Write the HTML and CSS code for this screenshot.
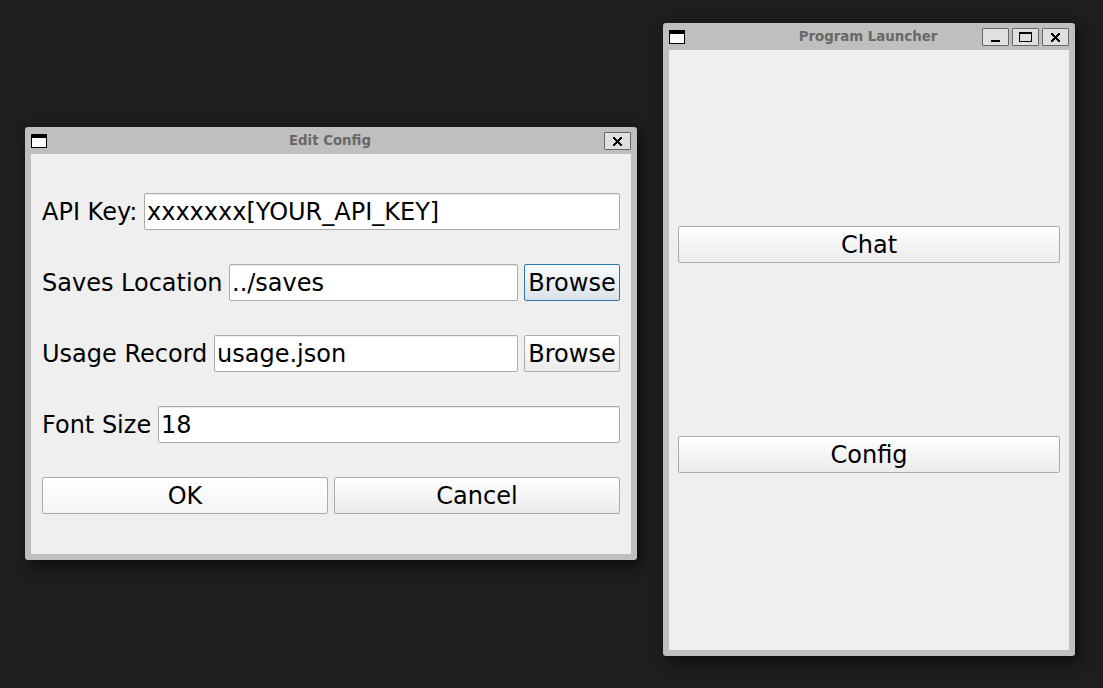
FILE: index.html
```
<!DOCTYPE html>
<html lang="en">
<head>
<meta charset="utf-8">
<title>Program Launcher</title>
<link rel="stylesheet" href="styles.css">
</head>
<body>
<main class="desktop">
  <section class="window config-window">
    <header class="titlebar">
      <span class="window-icon"></span>
      <h1 class="title">Edit Config</h1>
      <div class="controls">
        <button class="control" aria-label="Close"><svg width="9" height="9" viewBox="0 0 9 9" shape-rendering="crispEdges"><path d="M0 0h2v1h1v1h1v1h1v-1h1v-1h1v-1h2v2h-1v1h-1v1h-1v1h1v1h1v1h1v2h-2v-1h-1v-1h-1v-1h-1v1h-1v1h-1v1h-2v-2h1v-1h1v-1h1v-1h-1v-1h-1v-1h-1z"/></svg></button>
      </div>
    </header>
    <form class="content form">
      <label class="row"><span class="label label-key">API Key:</span><input class="field" type="text" value="xxxxxxx[YOUR_API_KEY]"></label>
      <div class="row"><label class="label label-saves" for="saves">Saves Location</label><input class="field" id="saves" type="text" value="../saves"><button class="button browse focused" type="button">Browse</button></div>
      <div class="row"><label class="label label-usage" for="usage">Usage Record</label><input class="field" id="usage" type="text" value="usage.json"><button class="button browse" type="button">Browse</button></div>
      <label class="row"><span class="label label-font">Font Size</span><input class="field" type="text" value="18"></label>
      <div class="row"><button class="button wide default" type="button">OK</button><button class="button wide" type="button">Cancel</button></div>
    </form>
  </section>
  <section class="window launcher-window">
    <header class="titlebar">
      <span class="window-icon"></span>
      <h1 class="title">Program Launcher</h1>
      <div class="controls">
        <button class="control" aria-label="Minimize"><svg width="9" height="9" viewBox="0 0 9 9" shape-rendering="crispEdges"><path d="M0 7h9v2H0z"/></svg></button>
        <button class="control" aria-label="Maximize"><svg width="13" height="10" viewBox="0 0 13 10" shape-rendering="crispEdges"><path fill-rule="evenodd" d="M0 0h13v10H0zM1 2v7h11V2z"/></svg></button>
        <button class="control" aria-label="Close"><svg width="9" height="9" viewBox="0 0 9 9" shape-rendering="crispEdges"><path d="M0 0h2v1h1v1h1v1h1v-1h1v-1h1v-1h2v2h-1v1h-1v1h-1v1h1v1h1v1h1v2h-2v-1h-1v-1h-1v-1h-1v1h-1v1h-1v1h-2v-2h1v-1h1v-1h1v-1h-1v-1h-1v-1h-1z"/></svg></button>
      </div>
    </header>
    <div class="content launcher">
      <button class="button" type="button">Chat</button>
      <button class="button" type="button">Config</button>
    </div>
  </section>
</main>
</body>
</html>
```
FILE: styles.css
```
* { box-sizing: border-box; }
body { margin: 0; }
.desktop {
  position: relative;
  width: 1103px;
  height: 688px;
  overflow: hidden;
  background: #1e1e1e;
  color: #000;
  font: 24px/28px "DejaVu Sans", sans-serif;
}
.window {
  position: absolute;
  display: flex;
  flex-direction: column;
  padding: 0 6px 6px;
  border-radius: 3px;
  background: #bfbfbf;
  box-shadow: 4px 5px 14px rgba(0, 0, 0, .6);
}
.config-window { left: 25px; top: 127px; width: 612px; height: 433px; }
.launcher-window { left: 663px; top: 23px; width: 412px; height: 633px; }
.titlebar {
  display: grid;
  grid-template-columns: 1fr auto 1fr;
  flex: none;
  height: 27px;
}
.window-icon {
  width: 16px;
  height: 14px;
  margin-top: 7px;
  border: 1px solid #000;
  border-top-width: 4px;
  background: #fff;
}
.title {
  margin: 0 1px 0 -1px;
  color: #686868;
  font-size: 13.33px;
  font-weight: bold;
  line-height: 27px;
}
.controls { display: flex; justify-content: flex-end; gap: 3px; padding-top: 5px; }
.control {
  display: flex;
  align-items: flex-end;
  justify-content: center;
  width: 27px;
  height: 18px;
  padding: 0 0 3px;
  border: 1px solid #666;
  border-radius: 1px;
  background: #e0e0e0;
}
.control svg { display: block; }
.content { flex: 1; background: #efefef; }
.form {
  display: flex;
  flex-direction: column;
  justify-content: center;
  gap: 34px;
  padding: 0 11px 1px;
}
.row { display: flex; gap: 6px; height: 37px; }
.label { flex: none; line-height: 38px; white-space: nowrap; }
.label-key { width: 96px; }
.label-saves { width: 181px; }
.label-usage { width: 166px; }
.label-font { width: 110px; }
.field, .button {
  min-width: 0;
  height: 37px;
  border: 1px solid #ababab;
  border-radius: 2px;
  color: #000;
  font: inherit;
}
.field {
  flex: 1;
  padding: 0 2px;
  background: #fff;
  box-shadow: inset 0 1px #ededed;
  outline: none;
}
.button { padding: 0; background: linear-gradient(#fff, #ebebeb); }
.browse { width: 96px; }
.wide { flex: 1; }
.default { background: linear-gradient(#fff, #f5f5f5); }
.focused { border-color: #2a76a5; background: linear-gradient(#fafcfd, #d9e2e9); }
.launcher {
  display: flex;
  flex-direction: column;
  gap: 173px;
  padding: 176px 9px 0;
}
```
